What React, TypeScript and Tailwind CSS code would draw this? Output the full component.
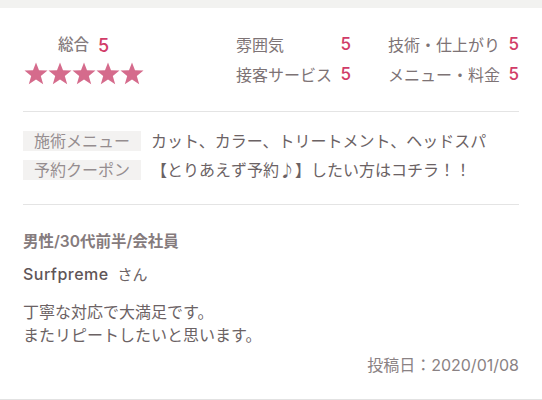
const ratings = [
  { label: "雰囲気", score: 5 },
  { label: "技術・仕上がり", score: 5 },
  { label: "接客サービス", score: 5 },
  { label: "メニュー・料金", score: 5 },
];

const details = [
  { label: "施術メニュー", value: "カット、カラー、トリートメント、ヘッドスパ" },
  { label: "予約クーポン", value: "【とりあえず予約♪】したい方はコチラ！！" },
];

function StarIcon() {
  return (
    <svg width="24" height="23" viewBox="0 0 24 23" className="block">
      <polygon
        points="12,0.5 15,8.3 23.5,8.6 16.8,13.9 19.2,22.3 12,17.4 4.8,22.3 7.2,13.9 0.5,8.6 9,8.3"
        fill="#d56b8c"
      />
    </svg>
  );
}

export default function App() {
  return (
    <div
      className="w-[542px] h-[400px] overflow-hidden bg-white text-[#6b6264]"
      style={{ fontFamily: '"Inter", "Noto Sans CJK JP", sans-serif' }}
    >
      <div className="h-[8px] bg-[#f2f2f0]" />

      <div className="px-[23px]">
        {/* scores */}
        <div className="flex pt-[25px] pb-[25px] border-b border-[#e4e4e4]">
          <div className="flex flex-col items-center w-[121px]">
            <div className="flex items-center h-[24px] gap-[9px]">
              <span className="text-[15.5px] font-medium text-[#857b7d]">総合</span>
              <span className="text-[18px] font-medium text-[#d13c68]">5</span>
            </div>
            <div className="flex mt-[5px]">
              {[0, 1, 2, 3, 4].map((i) => (
                <StarIcon key={i} />
              ))}
            </div>
          </div>
          <div className="ml-auto grid grid-cols-[115px_131px] gap-x-[37px] gap-y-[8px] pt-[1px]">
            {ratings.map((r) => (
              <div key={r.label} className="flex items-center justify-between h-[22px]">
                <span className="text-[16px] text-[#7d7375]">{r.label}</span>
                <span className="text-[17px] font-medium text-[#d13c68]">{r.score}</span>
              </div>
            ))}
          </div>
        </div>

        {/* menu / coupon */}
        <div className="flex flex-col gap-[9px] pt-[19px] pb-[24px] border-b border-[#e4e4e4]">
          {details.map((d) => (
            <div key={d.label} className="flex items-center">
              <span className="w-[118px] h-[20px] flex items-center pl-[11px] bg-[#f3f2f1] text-[16px] text-[#958d8f] leading-none">
                {d.label}
              </span>
              <span className="ml-[10px] text-[16px] text-[#6b6264] leading-none">{d.value}</span>
            </div>
          ))}
        </div>

        {/* review */}
        <div className="pt-[26px]">
          <div className="text-[15.5px] font-semibold text-[#857b7d] leading-[22px]">男性/30代前半/会社員</div>
          <div className="flex items-baseline mt-[10px] leading-[22px]">
            <span className="text-[16px] font-medium tracking-[0.03em] text-[#5f5557]">Surfpreme</span>
            <span className="ml-[9px] text-[15px] text-[#6b6264]">さん</span>
          </div>
          <div className="mt-[15px] text-[16px] leading-[23px] text-[#6b6264]">
            <p>丁寧な対応で大満足です。</p>
            <p>またリピートしたいと思います。</p>
          </div>
          <div className="mt-[7px] text-right text-[16px] leading-[22px] text-[#8a8284]">投稿日：2020/01/08</div>
        </div>
      </div>

      <div className="mt-[23px] h-[10px] border-t border-[#e2e2e2] bg-[#f1f1f0]" />
    </div>
  );
}
